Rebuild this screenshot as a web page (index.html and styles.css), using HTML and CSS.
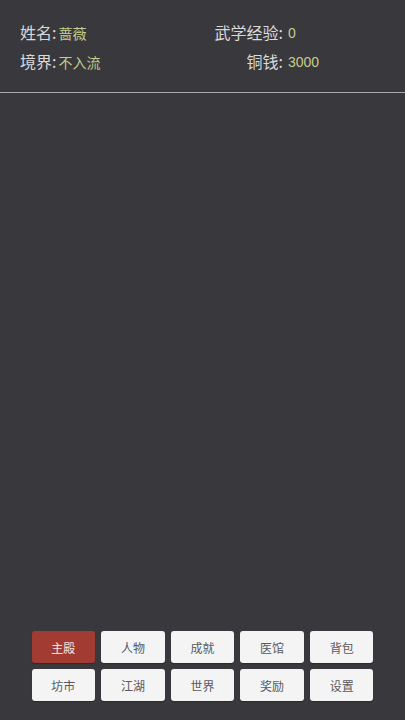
FILE: index.html
```html
<!DOCTYPE html>
<html lang="zh">
<head>
<meta charset="utf-8">
<link rel="stylesheet" href="styles.css">
</head>
<body>
<div class="app">
  <header class="info">
    <div class="pair"><span class="lbl">姓名:</span><span class="val">蔷薇</span></div>
    <div class="lbl r">武学经验:</div><div class="val num">0</div>
    <div class="pair"><span class="lbl">境界:</span><span class="val">不入流</span></div>
    <div class="lbl r">铜钱:</div><div class="val num">3000</div>
  </header>
  <main class="content"></main>
  <nav class="menu">
    <button class="btn active">主殿</button>
    <button class="btn">人物</button>
    <button class="btn">成就</button>
    <button class="btn">医馆</button>
    <button class="btn">背包</button>
    <button class="btn">坊市</button>
    <button class="btn">江湖</button>
    <button class="btn">世界</button>
    <button class="btn">奖励</button>
    <button class="btn">设置</button>
  </nav>
</div>
</body>
</html>
```
FILE: styles.css
```css
html, body {
  margin: 0;
  padding: 0;
  height: 100%;
  background: #39383d;
}
body {
  font-family: "Noto Sans CJK SC", "Noto Sans", sans-serif;
}
.app {
  height: 720px;
  display: flex;
  flex-direction: column;
}
.info {
  display: grid;
  grid-template-columns: 180px 83px 1fr;
  grid-auto-rows: 24px;
  align-items: center;
  row-gap: 5px;
  padding: 20px 0 0 20px;
  height: 93px;
  box-sizing: border-box;
  border-bottom: 1px solid #a9a8ab;
  align-content: start;
  white-space: nowrap;
}
.pair {
  display: flex;
  align-items: center;
}
.lbl {
  color: #dadadc;
  font-size: 16px;
  line-height: 24px;
}
.lbl.r {
  text-align: right;
}
.val {
  color: #c6cd8b;
  font-size: 14px;
  line-height: 24px;
  padding-left: 2px;
  padding-top: 1px;
}
.val.num {
  font-family: "Liberation Sans", "Noto Sans", sans-serif;
  padding-left: 5px;
}
.content {
  flex: 1;
}
.menu {
  width: 342px;
  margin: 0 auto 19px;
  display: grid;
  grid-template-columns: repeat(5, 1fr);
  gap: 6px 6px;
}
.btn {
  height: 32px;
  border: none;
  border-radius: 3px;
  background: #f4f4f4;
  color: #5a595d;
  font-family: "Noto Sans CJK SC", sans-serif;
  font-size: 12px;
  padding: 0;
  box-shadow: 0 1px 1px rgba(0,0,0,0.25);
}
.btn.active {
  background: #a23c33;
  color: #f3e3e0;
}
```
